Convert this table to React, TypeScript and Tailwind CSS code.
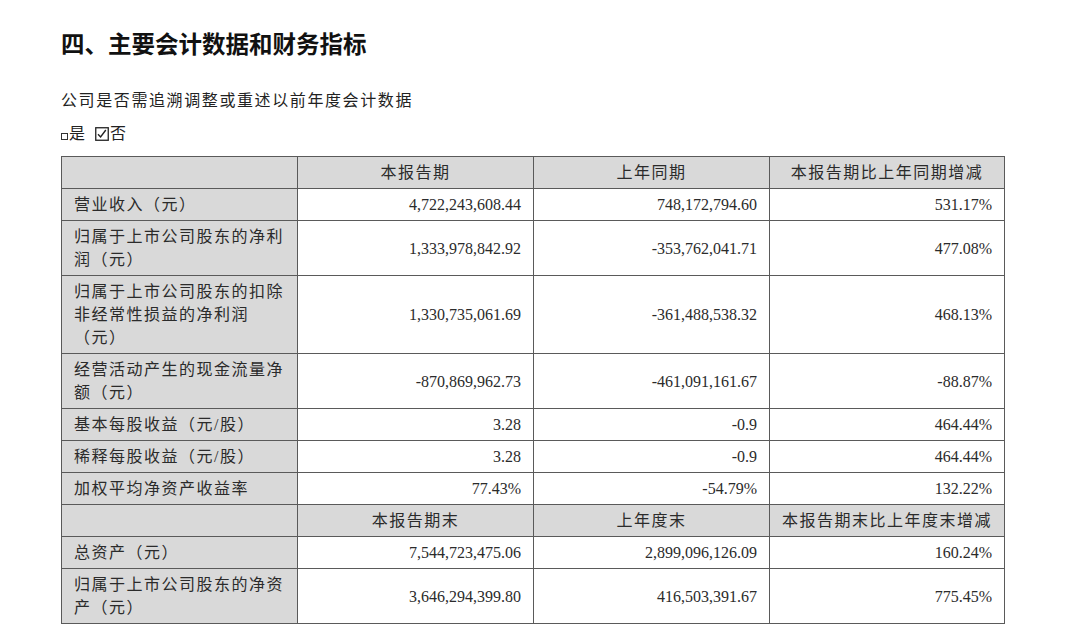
const font = "font-['Liberation_Serif','Noto_Sans_CJK_SC',serif]";

type Row = {
  label: string[];
  cur: string;
  prev: string;
  change: string;
  kind?: "data";
};

type Head = { kind: "head"; cols: string[] };

const rows: (Row | Head)[] = [
  { kind: "head", cols: ["本报告期", "上年同期", "本报告期比上年同期增减"] },
  { label: ["营业收入（元）"], cur: "4,722,243,608.44", prev: "748,172,794.60", change: "531.17%" },
  { label: ["归属于上市公司股东的净利", "润（元）"], cur: "1,333,978,842.92", prev: "-353,762,041.71", change: "477.08%" },
  { label: ["归属于上市公司股东的扣除", "非经常性损益的净利润", "（元）"], cur: "1,330,735,061.69", prev: "-361,488,538.32", change: "468.13%" },
  { label: ["经营活动产生的现金流量净", "额（元）"], cur: "-870,869,962.73", prev: "-461,091,161.67", change: "-88.87%" },
  { label: ["基本每股收益（元/股）"], cur: "3.28", prev: "-0.9", change: "464.44%" },
  { label: ["稀释每股收益（元/股）"], cur: "3.28", prev: "-0.9", change: "464.44%" },
  { label: ["加权平均净资产收益率"], cur: "77.43%", prev: "-54.79%", change: "132.22%" },
  { kind: "head", cols: ["本报告期末", "上年度末", "本报告期末比上年度末增减"] },
  { label: ["总资产（元）"], cur: "7,544,723,475.06", prev: "2,899,096,126.09", change: "160.24%" },
  { label: ["归属于上市公司股东的净资", "产（元）"], cur: "3,646,294,399.80", prev: "416,503,391.67", change: "775.45%" },
];

const cell = "border border-[#5a5a5a] px-[12px] pt-[4px] pb-[4px] leading-[23px] align-middle";

function DataTable() {
  return (
    <table className="mt-[10px] w-[943px] border-collapse table-fixed text-[16px] text-[#2b2b2b]">
      <colgroup>
        <col className="w-[236px]" />
        <col className="w-[236px]" />
        <col className="w-[236px]" />
        <col className="w-[235px]" />
      </colgroup>
      <tbody>
        {rows.map((r, i) =>
          r.kind === "head" ? (
            <tr key={i} className="bg-[#d9d9d9]">
              <td className={cell}>&nbsp;</td>
              {r.cols.map((c) => (
                <td key={c} className={`${cell} text-center tracking-[1.5px]`}>
                  {c}
                </td>
              ))}
            </tr>
          ) : (
            <tr key={i}>
              <td className={`${cell} bg-[#d9d9d9] tracking-[1.5px] whitespace-nowrap`}>
                {r.label.map((l) => (
                  <div key={l}>{l}</div>
                ))}
              </td>
              <td className={`${cell} text-right`}>{r.cur}</td>
              <td className={`${cell} text-right`}>{r.prev}</td>
              <td className={`${cell} text-right`}>{r.change}</td>
            </tr>
          )
        )}
      </tbody>
    </table>
  );
}

function CheckedBox() {
  return (
    <svg width="14" height="14" viewBox="0 0 14 14" className="inline-block mx-[1px]">
      <rect x="0.75" y="0.75" width="12.5" height="12.5" fill="none" stroke="#222" strokeWidth="1.3" />
      <path d="M3 7.2 L5.6 10 L10.8 3" fill="none" stroke="#222" strokeWidth="1.4" />
    </svg>
  );
}

export default function App() {
  return (
    <div className={`w-[1080px] h-[637px] bg-white pl-[61px] pt-[29px] overflow-hidden ${font}`}>
      <h1 className="text-[23.5px] leading-[32px] font-bold text-[#111]">
        四、主要会计数据和财务指标
      </h1>
      <p className="mt-[28px] text-[16px] leading-[24px] text-[#222] tracking-[1.6px]">
        公司是否需追溯调整或重述以前年度会计数据
      </p>
      <p className="mt-[9px] text-[16px] leading-[24px] text-[#222] flex items-center">
        <span className="inline-block w-[7px] h-[7px] border border-[#333] mt-[5px]"></span>
        <span className="ml-[1px]">是</span>
        <span className="ml-[9px] flex items-center">
          <CheckedBox />
        </span>
        <span>否</span>
      </p>
      <DataTable />
    </div>
  );
}
